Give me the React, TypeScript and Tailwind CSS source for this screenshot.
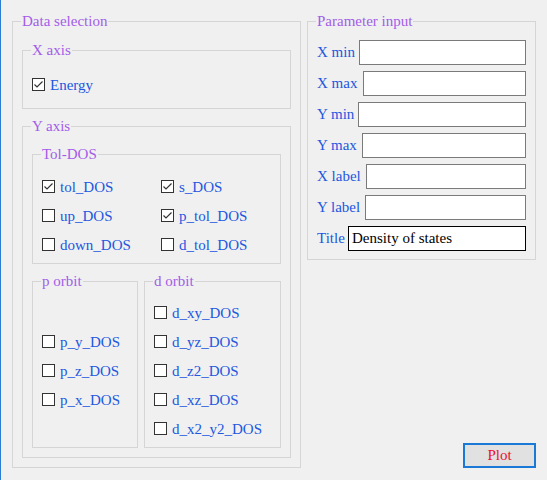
import type { ReactNode } from 'react';

// ==============================
// 1. SMALL PIECES
// ==============================

// WinForms style group box: border with the caption cut into the top line
function GroupBox({ title, className, children }: { title: string; className: string; children?: ReactNode }) {
  return (
    <fieldset className={`border border-[#d5d5d5] px-[9px] ${className}`}>
      <legend className="-ml-px px-px text-[15px] leading-[17px] text-[#a35de8]">{title}</legend>
      {children}
    </fieldset>
  );
}

function Check({ label, checked = false }: { label: string; checked?: boolean }) {
  return (
    <div className="flex h-[29px] items-center">
      <svg width="13" height="13" viewBox="0 0 13 13" className="shrink-0">
        <rect x="0.5" y="0.5" width="12" height="12" fill="#ffffff" stroke="#333333" />
        {checked && <path d="M2.5 6.5 L5 9 L10.5 3.5" fill="none" stroke="#333333" strokeWidth="1.2" />}
      </svg>
      <span className="ml-[5px] pt-px text-[15px] leading-[17px] text-[#2257e0] whitespace-nowrap">{label}</span>
    </div>
  );
}

// label on the left, text box pinned to the right edge
function Field({ label, width, value, active = false }: { label: string; width: string; value?: string; active?: boolean }) {
  return (
    <div className="flex h-[25px] items-center justify-between">
      <span className="text-[15px] leading-[17px] text-[#2257e0] whitespace-nowrap">{label}</span>
      <input
        readOnly
        defaultValue={value}
        className={`h-[25px] ${width} bg-white px-[3px] text-[15px] text-black outline-none border ${active ? 'border-black' : 'border-[#7a7a7a]'}`}
      />
    </div>
  );
}

// ==============================
// 2. COMPONENT
// ==============================

export default function App() {
  return (
    <div className="flex h-[480px] w-[547px] gap-[6px] border-l border-[#2b7cd3] bg-[#f0f0f0] pl-[11px] pt-[13px] font-[family-name:'Liberation_Serif','Times_New_Roman',serif]">
      {/* Data selection */}
      <GroupBox title="Data selection" className="h-[455px] w-[289px]">
        <GroupBox title="X axis" className="mt-[12px] h-[67px] pt-[11px]">
          <Check label="Energy" checked />
        </GroupBox>

        <GroupBox title="Y axis" className="mt-[9px] h-[340px]">
          <GroupBox title="Tol-DOS" className="mt-[11px] h-[118px] pt-[9px]">
            <div className="grid grid-cols-[119px_1fr]">
              <Check label="tol_DOS" checked />
              <Check label="s_DOS" checked />
              <Check label="up_DOS" />
              <Check label="p_tol_DOS" checked />
              <Check label="down_DOS" />
              <Check label="d_tol_DOS" />
            </div>
          </GroupBox>

          <div className="mt-[9px] flex gap-[6px]">
            <GroupBox title="p orbit" className="h-[175px] w-[106px] pt-[37px]">
              <Check label="p_y_DOS" />
              <Check label="p_z_DOS" />
              <Check label="p_x_DOS" />
            </GroupBox>
            <GroupBox title="d orbit" className="h-[175px] w-[137px] pt-[8px]">
              <Check label="d_xy_DOS" />
              <Check label="d_yz_DOS" />
              <Check label="d_z2_DOS" />
              <Check label="d_xz_DOS" />
              <Check label="d_x2_y2_DOS" />
            </GroupBox>
          </div>
        </GroupBox>
      </GroupBox>

      {/* Parameter input + Plot */}
      <div className="flex h-[455px] w-[229px] flex-col justify-between">
        <GroupBox title="Parameter input" className="h-[247px] pt-[10px]">
          <div className="flex flex-col gap-[6px]">
            <Field label="X min" width="w-[167px]" />
            <Field label="X max" width="w-[163px]" />
            <Field label="Y min" width="w-[168px]" />
            <Field label="Y max" width="w-[164px]" />
            <Field label="X label" width="w-[160px]" />
            <Field label="Y label" width="w-[161px]" />
            <Field label="Title" width="w-[178px]" value="Density of states" active />
          </div>
        </GroupBox>

        <button className="h-[25px] w-[73px] self-end border-2 border-[#1a78d7] bg-[#e1e1e1] text-[15px] leading-[17px] text-[#e8112d]">
          Plot
        </button>
      </div>
    </div>
  );
}
